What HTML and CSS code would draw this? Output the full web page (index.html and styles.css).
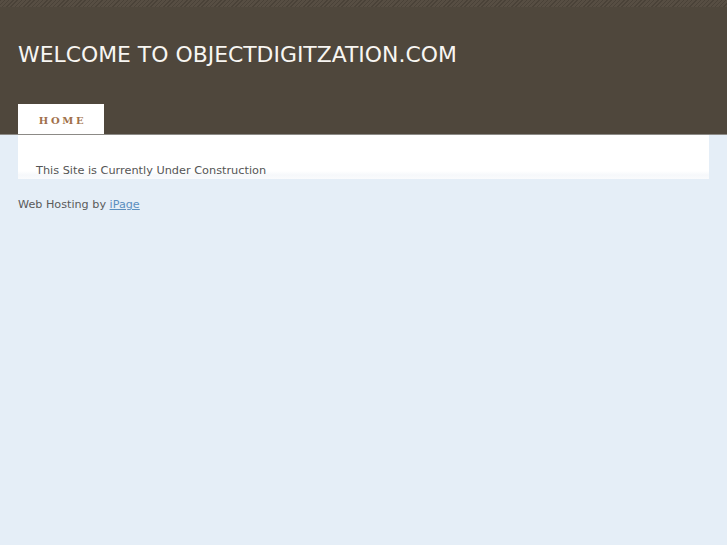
FILE: index.html
```html
<!DOCTYPE html>
<html lang="en">

<head>
    <title>objectdigitzation.com</title>
    <meta charset="UTF-8">
    <link rel="stylesheet" href="styles.css">
</head>

<body>
    <div class="od-header">
        <div class="od-stripes"></div>
        <h1 class="od-title">WELCOME TO OBJECTDIGITZATION.COM</h1>
        <div class="od-nav">
            <a class="od-tab" href="#">HOME</a>
        </div>
    </div>
    <div class="od-content">
        <p>This Site is Currently Under Construction</p>
    </div>
    <div class="od-footer">
        Web Hosting by <a href="#">iPage</a>
    </div>
</body>

</html>
```

FILE: styles.css
```css
* {
    box-sizing: border-box;
    font-family: 'DejaVu Sans', sans-serif;
}

body {
    margin: 0;
    background-color: #e5eef7;
}

.od-header {
    height: 135px;
    background-color: #4f473c;
    border-bottom: 1px solid #8c8a86;
    display: flex;
    flex-direction: column;
}

.od-stripes {
    height: 7px;
    background: repeating-linear-gradient(135deg, #4a4238 0, #4a4238 1px, #574e43 1px, #574e43 3px);
}

.od-title {
    margin: 34px 0 0 18px;
    font-size: 21.9px;
    font-weight: normal;
    color: #f8f6f2;
    line-height: 28px;
}

.od-nav {
    margin-top: auto;
    padding-left: 18px;
    display: flex;
}

.od-tab {
    width: 86px;
    height: 30px;
    background-color: #ffffff;
    color: #a1704a;
    text-decoration: none;
    font-family: 'DejaVu Serif', serif;
    font-weight: bold;
    font-size: 10px;
    letter-spacing: 2.6px;
    display: flex;
    align-items: center;
    justify-content: center;
    padding: 2px 0 0 3px;
}

.od-content {
    margin: 0 18px;
    height: 44px;
    background: linear-gradient(#ffffff 0, #ffffff 36px, #f6f8fb 40px, #fafbfd 44px);
    padding: 28px 18px 0;
}

.od-content p {
    margin: 0;
    font-size: 11.3px;
    color: #555555;
    line-height: 16px;
}

.od-footer {
    margin: 18px 18px 0;
    font-size: 11.2px;
    color: #5a5a5a;
    line-height: 16px;
}

.od-footer a {
    color: #5b8fbf;
}
```
